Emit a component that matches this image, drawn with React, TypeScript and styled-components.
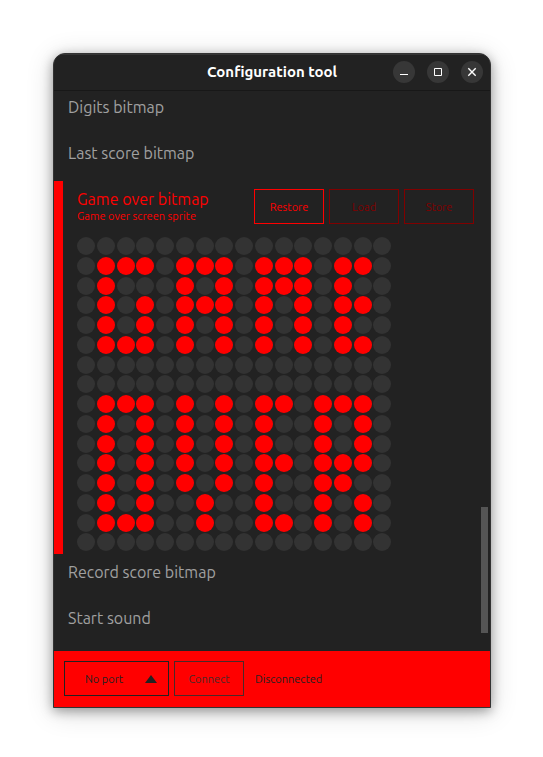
import React, { useState } from "react";
import styled, { createGlobalStyle } from "styled-components";

const RED = "#ff0000";
const DARK = "#222222";

const GlobalStyle = createGlobalStyle`
  *, *::before, *::after { box-sizing: border-box; }
  body {
    margin: 0;
    background: #ffffff;
    font-family: Ubuntu, "Open Sans", "Noto Sans", sans-serif;
    font-weight: 450;
  }
  button, select { font: inherit; cursor: pointer; }
`;

const Desktop = styled.div`
  padding: 53px 52px 49px 53px;
`;

const Window = styled.div`
  display: flex;
  flex-direction: column;
  overflow: hidden;
  background: ${DARK};
  border: 1px solid #333333;
  border-radius: 12px 12px 0 0;
  box-shadow: 0 3px 12px rgba(0, 0, 0, 0.36), 0 4px 28px rgba(0, 0, 0, 0.16);
`;

const TitleBar = styled.header`
  display: grid;
  grid-template-columns: 1fr auto 1fr;
  align-items: center;
  height: 37px;
  padding: 0 7px;
  border-bottom: 1px solid #181818;
  box-shadow: inset 0 1px #363636;
`;

const Title = styled.h1`
  grid-column: 2;
  margin: 0;
  color: #ffffff;
  font-size: 15px;
  line-height: 20px;
  font-weight: 700;
  white-space: nowrap;
`;

const WindowControls = styled.div`
  display: flex;
  justify-content: flex-end;
  gap: 12px;
`;

const WindowButton = styled.button`
  display: flex;
  width: 22px;
  height: 22px;
  padding: 0;
  border: 0;
  border-radius: 50%;
  background: #373737;
  color: #ffffff;

  svg { display: block; fill: none; stroke: currentColor; }
`;

const Content = styled.main`
  position: relative;
  padding-bottom: 3px;
`;

const Entry = styled.button`
  display: block;
  width: 100%;
  margin: 0 0 14px;
  padding: 0 14px;
  border: 0;
  background: transparent;
  color: #a0a0a0;
  font-size: 16px;
  line-height: 32px;
  text-align: left;
`;

const Panel = styled.section`
  margin: -2px 0 2px;
  padding: 8px 16px 1px 14px;
  border-left: 9px solid ${RED};
`;

const PanelHeader = styled.div`
  display: flex;
  justify-content: space-between;
  gap: 5px;
  margin-bottom: 13px;
`;

const PanelHeading = styled.div`
  color: ${RED};
  white-space: nowrap;
`;

const PanelTitle = styled.h2`
  margin: 0;
  font-size: 16px;
  line-height: 20px;
  font-weight: inherit;
`;

const PanelNote = styled.p`
  margin: 0;
  font-size: 11px;
  line-height: 14px;
`;

const Actions = styled.div`
  display: flex;
  gap: 5px;
`;

const OutlineButton = styled.button<{ $color: string }>`
  width: 70px;
  height: 35px;
  padding: 0;
  border: 1px solid ${(p) => p.$color};
  background: transparent;
  color: ${(p) => p.$color};
  font-size: 11px;
`;

const DotMatrix = styled.div`
  display: grid;
  grid-template-columns: repeat(16, 1fr);
  grid-template-rows: repeat(16, 1fr);
  width: 316px;
  aspect-ratio: 1;
`;

const Dot = styled.button<{ $lit: boolean }>`
  width: 18px;
  height: 18px;
  padding: 0;
  border: 0;
  border-radius: 50%;
  background: ${(p) => (p.$lit ? RED : "#333333")};
`;

const ScrollThumb = styled.div`
  position: absolute;
  right: 2px;
  bottom: 18px;
  width: 7px;
  height: 126px;
  background: #555555;
`;

const StatusBar = styled.footer`
  display: flex;
  align-items: center;
  gap: 5px;
  padding: 10px 10px 11px;
  background: ${RED};
  color: ${DARK};
  font-size: 11px;
`;

const PortPicker = styled.label`
  position: relative;
  display: flex;

  select {
    width: 105px;
    height: 35px;
    padding: 0 30px 0 20px;
    border: 1px solid ${DARK};
    border-radius: 0;
    appearance: none;
    background: transparent;
    color: ${DARK};
  }

  svg {
    position: absolute;
    top: 14px;
    right: 12px;
    fill: ${DARK};
    pointer-events: none;
  }
`;

const Status = styled.output`
  padding-left: 6px;
`;

const BITMAP = [
  "................",
  ".###.###.###.##.",
  ".#...#.#.###.#..",
  ".#.#.###.#.#.##.",
  ".#.#.#.#.#.#.#..",
  ".###.#.#.#.#.##.",
  "................",
  "................",
  ".###.#.#.##.###.",
  ".#.#.#.#.#..#.#.",
  ".#.#.#.#.#..#.#.",
  ".#.#.#.#.##.###.",
  ".#.#.#.#.#..##..",
  ".#.#..#..#..#.#.",
  ".###..#..##.#.#.",
  "................",
];

const initialDots = BITMAP.flatMap((row) => [...row].map((c) => c === "#"));

export default function App() {
  const [dots, setDots] = useState(initialDots);
  const toggle = (index: number) =>
    setDots(dots.map((lit, i) => (i === index ? !lit : lit)));

  return (
    <>
      <GlobalStyle />
      <Desktop>
        <Window>
          <TitleBar>
            <Title>Configuration tool</Title>
            <WindowControls>
              <WindowButton aria-label="Minimize">
                <svg width="22" height="22"><path d="M7 13.5h8" /></svg>
              </WindowButton>
              <WindowButton aria-label="Maximize">
                <svg width="22" height="22"><path d="M7.5 7.5h7v7h-7z" /></svg>
              </WindowButton>
              <WindowButton aria-label="Close">
                <svg width="22" height="22"><path d="M7.3 7.3l7.4 7.4M14.7 7.3l-7.4 7.4" strokeWidth="1.4" /></svg>
              </WindowButton>
            </WindowControls>
          </TitleBar>
          <Content>
            <Entry>Digits bitmap</Entry>
            <Entry>Last score bitmap</Entry>
            <Panel>
              <PanelHeader>
                <PanelHeading>
                  <PanelTitle>Game over bitmap</PanelTitle>
                  <PanelNote>Game over screen sprite</PanelNote>
                </PanelHeading>
                <Actions>
                  <OutlineButton $color={RED} onClick={() => setDots(initialDots)}>Restore</OutlineButton>
                  <OutlineButton $color="#800000" disabled>Load</OutlineButton>
                  <OutlineButton $color="#800000" disabled>Store</OutlineButton>
                </Actions>
              </PanelHeader>
              <DotMatrix>
                {dots.map((lit, i) => (
                  <Dot
                    key={i}
                    $lit={lit}
                    aria-pressed={lit}
                    aria-label={`Row ${Math.floor(i / 16) + 1}, column ${(i % 16) + 1}`}
                    onClick={() => toggle(i)}
                  />
                ))}
              </DotMatrix>
            </Panel>
            <Entry>Record score bitmap</Entry>
            <Entry>Start sound</Entry>
            <ScrollThumb />
          </Content>
          <StatusBar>
            <PortPicker>
              <select aria-label="Port">
                <option>No port</option>
              </select>
              <svg width="12" height="8"><path d="M6 0l6 8H0z" /></svg>
            </PortPicker>
            <OutlineButton $color="#4a2a2a" disabled>Connect</OutlineButton>
            <Status>Disconnected</Status>
          </StatusBar>
        </Window>
      </Desktop>
    </>
  );
}
